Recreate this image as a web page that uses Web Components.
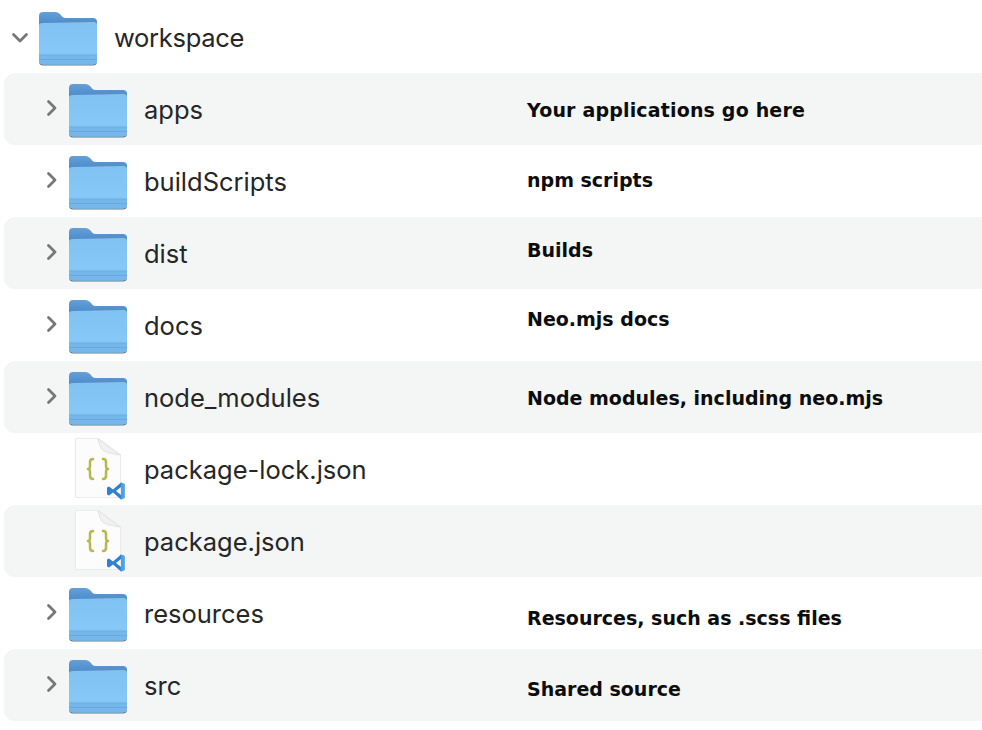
<!doctype html>
<html>
<head>
<meta charset="utf-8">
<title>workspace</title>
<style>
  html,body{ margin:0; background:#fff; }
</style>
</head>
<body>
<file-tree>
  <tree-row name="workspace" kind="folder" open top></tree-row>
  <tree-row name="apps" kind="folder" note="Your applications go here" shift="1" wide striped></tree-row>
  <tree-row name="buildScripts" kind="folder" note="npm scripts" shift="-1"></tree-row>
  <tree-row name="dist" kind="folder" note="Builds" shift="-3" striped></tree-row>
  <tree-row name="docs" kind="folder" note="Neo.mjs docs" shift="-6"></tree-row>
  <tree-row name="node_modules" kind="folder" note="Node modules, including neo.mjs" shift="1" striped></tree-row>
  <tree-row name="package-lock.json" kind="file"></tree-row>
  <tree-row name="package.json" kind="file" striped></tree-row>
  <tree-row name="resources" kind="folder" note="Resources, such as .scss files" shift="5"></tree-row>
  <tree-row name="src" kind="folder" note="Shared source" shift="4" striped></tree-row>
</file-tree>

<script>
const folderSvg = `
<svg width="58" height="72" viewBox="0 0 58 72" aria-hidden="true">
  <defs>
    <linearGradient id="back" x1="0" y1="0" x2="0" y2="1">
      <stop offset="0" stop-color="#659fd6"/><stop offset="1" stop-color="#3d7fc6"/>
    </linearGradient>
    <linearGradient id="front" x1="0" y1="0" x2="0" y2="1">
      <stop offset="0" stop-color="#80c2f2"/><stop offset="1" stop-color="#88caf8"/>
    </linearGradient>
  </defs>
  <path d="M4 64.500 H54 Q58 64.500 58 60 V58 H0 V60 Q0 64.500 4 64.500Z" fill="#62788c"/>
  <path d="M0 15 Q0 11 4 11 H16 Q19 11 21 13 L23 15.500 Q24.500 17 27 17 H54 Q58 17 58 21 V30 H0Z" fill="url(#back)"/>
  <path d="M0 24.500 Q0 22 3.500 22 L54.500 21 Q58 21 58 24 V59 Q58 63.400 54 63.400 H4 Q0 63.400 0 59Z" fill="url(#front)"/>
  <path d="M0 53.500 H58 V59 Q58 63.400 54 63.400 H4 Q0 63.400 0 59Z" fill="#75b7ea"/>
  <rect x="0" y="53.500" width="58" height="1" fill="#6fb0e4"/>
  <rect x="0" y="58" width="58" height="1" fill="#68a8de"/>
</svg>`

const fileSvg = `
<svg width="58" height="72" viewBox="0 0 58 72" aria-hidden="true">
  <path d="M6.500 5.500 H29 L51.500 22 V64.500 H6.500Z" fill="#fcfcfc" stroke="#ebebeb"/>
  <path d="M29 5.500 Q31 16 35 18 Q40 20.500 51.500 22Z" fill="#f1f1f1" stroke="#dcdcdc" stroke-width=".8"/>
  <g fill="none" stroke="#b6b84c" stroke-width="2.500" stroke-linecap="round" stroke-linejoin="round">
    <path d="M24 26 Q21 26 21 29 V33 Q21 36 19 36 Q21 36 21 39 V43 Q21 46 24 46"/>
    <path d="M34 26 Q37 26 37 29 V33 Q37 36 39 36 Q37 36 37 39 V43 Q37 46 34 46"/>
  </g>
  <path d="M52 49.500 L55.500 51 V65 L52 66.500 L44 59.500 L40 62.500 L38 61.500 V54.500 L40 53.500 L44 56.500Z M52 54 L47 58 L52 62Z" fill="#2f80d0" fill-rule="evenodd"/>
  <path d="M52 49.500 L55.500 51 V65 L52 66.500Z" fill="#4aa3e8"/>
</svg>`

const rowTpl = document.createElement('template')
rowTpl.innerHTML = `
  <style>
    :host{ display:block; }
    .row{
      display:flex; align-items:center;
      height:72px; margin-left:4px; padding-left:36px;
      border-radius:11px 0 0 11px;
    }
    :host([striped]) .row{ background:#f4f5f5; }
    :host([top]) .row{ padding-left:6px; }
    .toggle{ width:29px; height:72px; flex:none; display:flex; align-items:center; }
    .toggle svg{ display:block; margin-bottom:2px; }
    .icon{ flex:none; width:58px; height:72px; }
    .icon svg{ display:block; }
    .name{
      flex:none; width:383px; margin-left:17px; box-sizing:border-box;
      font:400 25.500px/1 Inter, 'Noto Sans', sans-serif; color:#262626;
      padding-top:2px;
      white-space:nowrap;
    }
    :host([top]) .name{ width:413px; margin-left:17px; letter-spacing:-.3px; }
    .note{
      font:700 19px/1.2 'DejaVu Sans', Verdana, sans-serif; color:#0c0c0c;
      white-space:nowrap;
    }
    :host([wide]) .note{ letter-spacing:.17px; }
  </style>
  <div class="row">
    <div class="toggle"></div>
    <div class="icon"></div>
    <div class="name"></div>
    <div class="note"></div>
  </div>
`

const chevron = open => open
  ? `<svg width="20" height="14" viewBox="0 0 20 14" style="margin:2px 0 0 0"><path d="M3.500 3.500 L10 10 L16.500 3.500" fill="none" stroke="#777" stroke-width="2.800" stroke-linecap="round" stroke-linejoin="round"/></svg>`
  : `<svg width="14" height="18" viewBox="0 0 14 18" style="margin-left:5px"><path d="M3.500 2.500 L10 9 L3.500 15.500" fill="none" stroke="#777" stroke-width="2.800" stroke-linecap="round" stroke-linejoin="round"/></svg>`

class TreeRow extends HTMLElement{
  constructor(){
    super()
    this.attachShadow({mode:'open'}).appendChild(rowTpl.content.cloneNode(true))
  }
  connectedCallback(){
    const $ = sel => this.shadowRoot.querySelector(sel)
    const isFolder = this.getAttribute('kind') === 'folder'
    if (isFolder) $('.toggle').innerHTML = chevron(this.hasAttribute('open'))
    $('.icon').innerHTML = isFolder ? folderSvg : fileSvg
    $('.name').textContent = this.getAttribute('name')
    $('.note').textContent = this.getAttribute('note') || ''
    // the notes were typed by hand over the screenshot, they don't sit on a common line
    const shift = Number(this.getAttribute('shift') || 0)
    if (shift > 0) $('.note').style.marginTop = shift * 2 + 'px'
    if (shift < 0) $('.note').style.marginBottom = -shift * 2 + 'px'
  }
}
customElements.define('tree-row', TreeRow)

class FileTree extends HTMLElement{
  constructor(){
    super()
    this.attachShadow({mode:'open'}).innerHTML = `
      <style>
        :host{ display:block; padding-top:1px; background:#fff; }
      </style>
      <slot></slot>
    `
  }
}
customElements.define('file-tree', FileTree)
</script>
</body>
</html>
